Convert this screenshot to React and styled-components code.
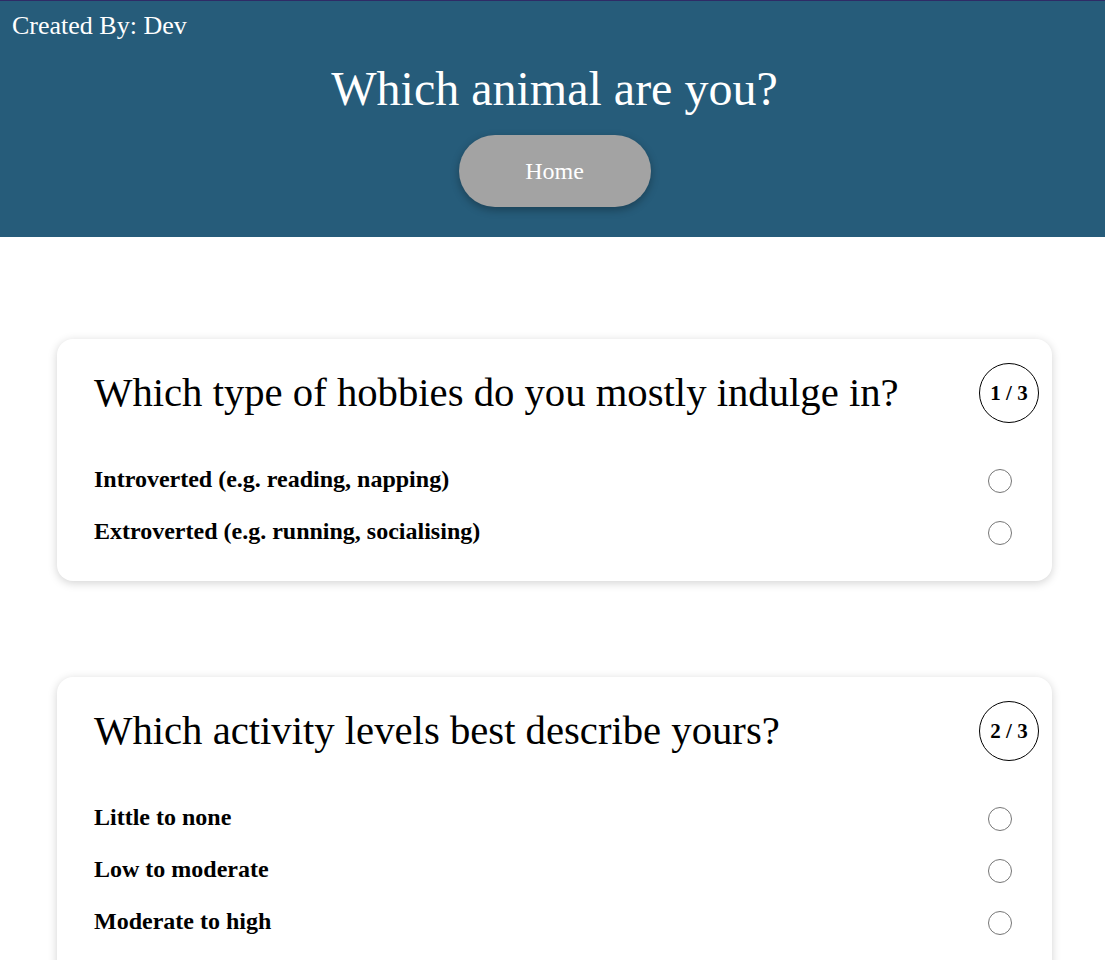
import React from 'react';
import styled, { createGlobalStyle } from 'styled-components';

const GlobalStyle = createGlobalStyle`
    body {
        margin: 0;
        font-family: "Liberation Serif", "Times New Roman", serif;
        background: #ffffff;
    }
`;

const Header = styled.header`
    background: #265c7a;
    border-top: 1px solid #2e2b66;
    height: 236px;
    display: flex;
    flex-direction: column;
    align-items: center;
    color: #ffffff;
`;

const Credit = styled.div`
    align-self: flex-start;
    font-size: 26px;
    padding: 10px 0 0 12px;
    line-height: 30px;
`;

const Title = styled.h1`
    font-size: 48px;
    font-weight: normal;
    margin: 20px 0 0 4px;
    line-height: 56px;
`;

const HomeButton = styled.button`
    margin: 18px 0 0 4px;
    width: 192px;
    height: 72px;
    border: none;
    border-radius: 36px;
    background: #a3a3a3;
    color: #ffffff;
    font-family: inherit;
    font-size: 24px;
    box-shadow: 0 3px 8px rgba(0, 0, 0, 0.3);
    cursor: pointer;
`;

const Main = styled.main`
    padding: 102px 0 40px;
    display: flex;
    flex-direction: column;
    gap: 96px;
`;

const Card = styled.section`
    width: 995px;
    margin: 0 auto 0 57px;
    box-sizing: border-box;
    background: #ffffff;
    border-radius: 16px;
    box-shadow: 0 2px 10px rgba(0, 0, 0, 0.18);
    padding: 24px 13px 37px 37px;
`;

const QuestionRow = styled.div`
    display: flex;
    align-items: center;
    justify-content: space-between;
`;

const Question = styled.h2`
    margin: 0;
    font-size: 40.7px;
    font-weight: normal;
    line-height: 60px;
`;

const Badge = styled.div`
    width: 58px;
    height: 58px;
    border: 1px solid #000;
    border-radius: 50%;
    display: flex;
    align-items: center;
    justify-content: center;
    font-weight: bold;
    font-size: 21px;
`;

const Options = styled.div`
    margin-top: 43px;
    padding-right: 27px;
    display: flex;
    flex-direction: column;
    gap: 26px;
`;

const Option = styled.label`
    display: flex;
    align-items: center;
    justify-content: space-between;
    font-size: 24px;
    font-weight: bold;
    height: 26px;
    cursor: pointer;
`;

const Radio = styled.input`
    appearance: none;
    width: 24px;
    height: 24px;
    margin: 4px 0 0;
    border: 1.5px solid #767676;
    border-radius: 50%;
    box-sizing: border-box;
`;

const questions = [
    {
        text: 'Which type of hobbies do you mostly indulge in?',
        options: ['Introverted (e.g. reading, napping)', 'Extroverted (e.g. running, socialising)'],
    },
    {
        text: 'Which activity levels best describe yours?',
        options: ['Little to none', 'Low to moderate', 'Moderate to high', 'Very high'],
    },
    {
        text: 'What is your ideal environment?',
        options: ['Forest', 'Ocean', 'Desert'],
    },
];

export default function App() {
    return (
        <>
            <GlobalStyle />
            <Header>
                <Credit>Created By: Dev</Credit>
                <Title>Which animal are you?</Title>
                <HomeButton>Home</HomeButton>
            </Header>
            <Main>
                {questions.map((q, i) => (
                    <Card key={i}>
                        <QuestionRow>
                            <Question>{q.text}</Question>
                            <Badge>{i + 1} / {questions.length}</Badge>
                        </QuestionRow>
                        <Options>
                            {q.options.map((opt, j) => (
                                <Option key={j}>
                                    {opt}
                                    <Radio type="radio" name={'q' + i} />
                                </Option>
                            ))}
                        </Options>
                    </Card>
                ))}
            </Main>
        </>
    );
}
